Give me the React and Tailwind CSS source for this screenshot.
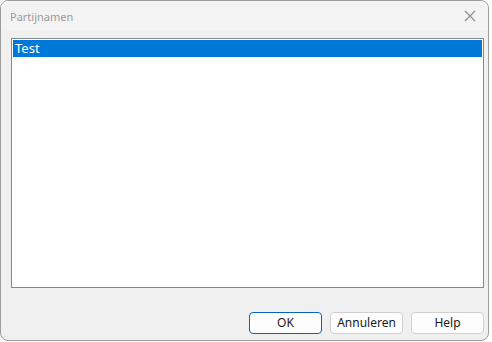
export default function App() {
  const font = { fontFamily: '"Segoe UI", "Noto Sans", "Open Sans", sans-serif' };

  return (
    <div className="h-[342px] w-[492px] bg-white" style={font}>
      <div className="flex h-[341px] w-[489px] flex-col overflow-hidden rounded-[8px] border border-[#9c9c9c] bg-[#f0f0f0]">
        <div className="flex h-[30px] shrink-0 items-center justify-between bg-[#f3f3f3] pl-[9px] pr-[10px]">
          <span className="text-[11px] leading-none text-[#9a9a9a]">Partijnamen</span>
          <svg width="12" height="12" viewBox="0 0 12 12" className="mr-[2px]">
            <path d="M1 1 L11 11 M11 1 L1 11" stroke="#8a8a8a" strokeWidth="1.1" fill="none" />
          </svg>
        </div>

        <div className="flex flex-1 flex-col pl-[10px] pr-[4px] pt-[7px]">
          <div className="h-[250px] w-[473px] border border-[#828790] bg-white p-[1px]">
            <div className="flex h-[17px] items-center bg-[#0078d7] pl-[2px] text-[13px] leading-none text-white">
              Test
            </div>
          </div>

          <div className="mt-[24px] flex justify-end gap-[8px]">
            <button
              type="button"
              className="h-[22px] w-[73px] rounded-[4px] border border-[#0067c0] bg-[#fdfdfd] text-[12px] text-[#1b1b1b]"
            >
              OK
            </button>
            <button
              type="button"
              className="h-[22px] w-[73px] rounded-[4px] border border-[#d0d0d0] bg-[#fdfdfd] text-[12px] text-[#1b1b1b]"
            >
              Annuleren
            </button>
            <button
              type="button"
              className="h-[22px] w-[73px] rounded-[4px] border border-[#d0d0d0] bg-[#fdfdfd] text-[12px] text-[#1b1b1b]"
            >
              Help
            </button>
          </div>
        </div>
      </div>
    </div>
  );
}
